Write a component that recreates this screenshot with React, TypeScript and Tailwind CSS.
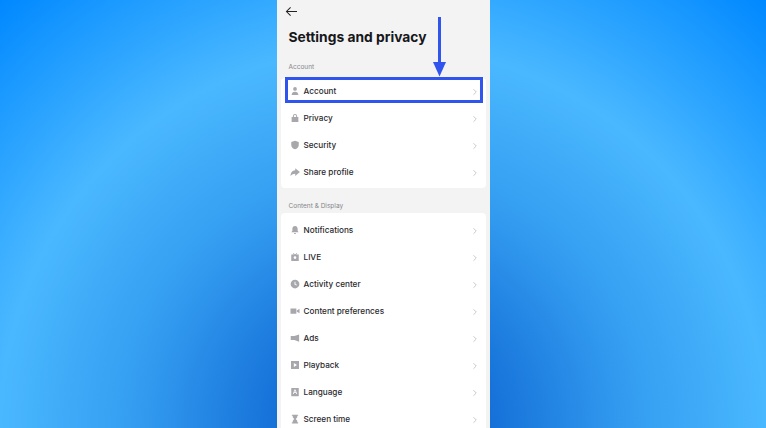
import { ChevronRight } from "lucide-react";
import type { ReactNode } from "react";

const g = "#a8a8ac";

const icons: Record<string, ReactNode> = {
  account: (
    <>
      <circle cx="8" cy="4.6" r="3" />
      <path d="M2.6 14.5c0-3.6 2.2-5.4 5.4-5.4s5.4 1.8 5.4 5.4z" />
    </>
  ),
  privacy: <path fillRule="evenodd" d="M4.6 6.5V5a3.4 3.4 0 0 1 6.8 0v1.5h2V14.5H2.6V6.5zM6.2 6.5h3.6V5a1.8 1.8 0 0 0-3.6 0z" />,
  security: <path d="M8 1.2 14 3.2v4.6c0 3.4-2.6 5.8-6 7-3.4-1.2-6-3.6-6-7V3.2z" />,
  share: <path d="M8.4 1.8 15.8 8l-7.4 6.2v-3.4C5.4 10.8 3 12 .8 14.4 1 9 3.6 5.2 8.4 5z" />,
  notifications: (
    <>
      <path d="M8 1.4c2.6 0 4.2 2 4.2 4.6v3l1.6 2.6H2.2L3.8 9V6c0-2.6 1.6-4.6 4.2-4.6z" />
      <path d="M6.2 12.6h3.6a1.8 1.8 0 0 1-3.6 0z" />
    </>
  ),
  live: <path fillRule="evenodd" d="M5.2 1.6 8 3.8l2.8-2.2.7.9L9.8 4H14v10.4H2V4h4.2L4.5 2.5zM8 6.6a2.2 2.2 0 1 0 0 4.4 2.2 2.2 0 0 0 0-4.4z" />,
  activity: <path fillRule="evenodd" d="M8 1a7 7 0 1 1 0 14A7 7 0 0 1 8 1zM7.2 4.2v4.4l3.1 1.9.8-1.2-2.4-1.5V4.2z" />,
  content: <path d="M.8 3.8h9.4v8.4H.8zM11 7l4.2-2.6v7.2L11 9z" />,
  ads: <path d="M14.6 2.2v11.6L7 11.2H1.2V4.8H7z" />,
  playback: <path fillRule="evenodd" d="M1.6 1.6h12.8v12.8H1.6zM6.2 4.8v6.4L11.2 8z" />,
  language: <path fillRule="evenodd" d="M2 1.4h12v13.2H2zM7.2 4 4.6 11.2H6l.5-1.7h3l.5 1.7h1.4L8.8 4zM8 5.7l1.1 2.7H6.9z" />,
  screen: <path d="M3 1h10v1.8h-1.4v2.3L9.2 8l2.4 2.9v2.3H13V15H3v-1.8h1.4v-2.3L6.8 8 4.4 5.1V2.8H3z" />,
};

function RowIcon({ name }: { name: string }) {
  return (
    <svg viewBox="0 0 16 16" fill={g} className="mb-[1px] h-[10px] w-[10px] shrink-0">
      {icons[name]}
    </svg>
  );
}

function Row({ icon, label }: { icon: string; label: string }) {
  return (
    <div className="flex h-[27px] items-center pl-[9px] pr-[6px]">
      <RowIcon name={icon} />
      <span className="ml-[4px] flex-1 text-[8.2px] font-medium leading-none text-[#2a2a2e]">{label}</span>
      <ChevronRight size={10} strokeWidth={1.5} className="text-[#a8a8ac]" />
    </div>
  );
}

export default function App() {
  return (
    <div className="flex h-[428px] w-[766px] justify-center overflow-hidden bg-[radial-gradient(circle_at_383px_429px,#0f66d0_0px,#1570d8_106px,#339cf0_245px,#4ab8ff_383px,#0088ff_575px)] font-['Inter',sans-serif]">
      <div className="relative h-full w-[213px] overflow-hidden bg-[#f3f3f3]">
        <div className="px-[8px] pt-[6px]">
          <svg viewBox="0 0 14 12" fill="none" stroke="#222" strokeWidth="1.1" className="h-[11px] w-[13px]">
            <path d="M13 6H1.5M6 1.5 1.5 6 6 10.5" />
          </svg>
        </div>
        <h1 className="ml-[12px] mt-[10px] text-[13.8px] font-bold leading-[20px] text-[#17171b]">Settings and privacy</h1>
        <p className="ml-[12px] mt-[15px] text-[6.5px] leading-[10px] text-[#85858a]">Account</p>

        <div className="mx-[4px] mt-[6px] rounded-[4px] bg-white pb-[2px]">
          <Row icon="account" label="Account" />
          <Row icon="privacy" label="Privacy" />
          <Row icon="security" label="Security" />
          <Row icon="share" label="Share profile" />
        </div>

        <p className="ml-[12px] mt-[13px] text-[6.5px] leading-[10px] text-[#85858a]">Content &amp; Display</p>

        <div className="mx-[4px] mt-[2px] rounded-[4px] bg-white pt-[4px] pb-[4px]">
          <Row icon="notifications" label="Notifications" />
          <Row icon="live" label="LIVE" />
          <Row icon="activity" label="Activity center" />
          <Row icon="content" label="Content preferences" />
          <Row icon="ads" label="Ads" />
          <Row icon="playback" label="Playback" />
          <Row icon="language" label="Language" />
          <Row icon="screen" label="Screen time" />
        </div>

        {/* Highlight box and arrow over the Account row */}
        <div className="absolute left-[8px] top-[77px] h-[26px] w-[198px] border-[3px] border-[#2f55ee]" />
        <svg viewBox="0 0 13 60" className="absolute left-[156px] top-[17px] h-[60px] w-[13px]">
          <rect x="5" y="0" width="3" height="46" fill="#2f55ee" />
          <path d="M0 45h13L6.5 59.5z" fill="#2f55ee" />
        </svg>
      </div>
    </div>
  );
}
